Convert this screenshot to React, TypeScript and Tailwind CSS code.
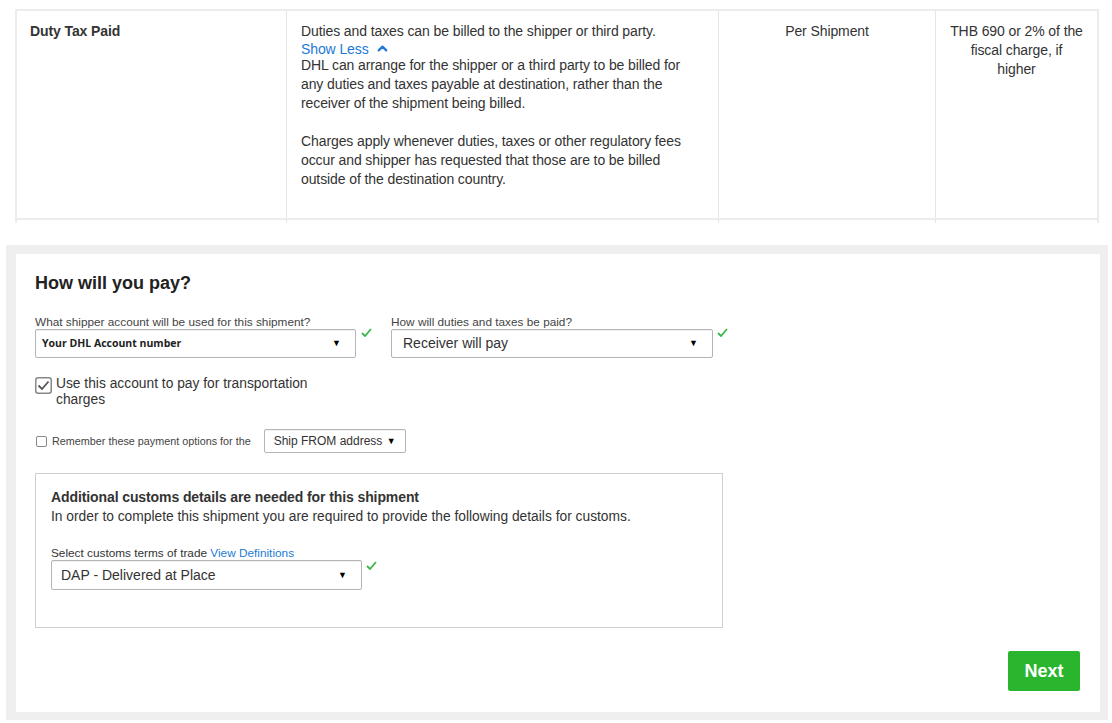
import React from "react";
import { ChevronUp } from "lucide-react";

const arial = { fontFamily: '"Liberation Sans", Arial, sans-serif' };

function Check({ className = "" }: { className?: string }) {
  return (
    <svg width="11" height="9" viewBox="0 0 11 9" className={className}>
      <path d="M1 5 L4 8 L10 1" fill="none" stroke="#3cb54a" strokeWidth="1.8" />
    </svg>
  );
}

function Arrow() {
  return <span className="text-[9px] leading-none text-black">▼</span>;
}

function Select({
  value,
  className,
  textClass,
}: {
  value: string;
  className: string;
  textClass: string;
}) {
  return (
    <div
      className={`flex items-center justify-between border border-[#b5b5b5] rounded-[2px] bg-white shadow-[inset_0_1px_1px_rgba(0,0,0,0.06)] ${className}`}
    >
      <span className={textClass}>{value}</span>
      <Arrow />
    </div>
  );
}

function FeeTable() {
  return (
    <div className="pt-[9px] pl-[15px]">
      <div className="w-[1084px] border-t-2 border-l-2 border-r-2 border-[#ececec]">
        <div className="grid grid-cols-[270px_432px_217px_161px] h-[207px] text-[14px] leading-[19px] text-[#333] tracking-[-0.1px]">
          <div className="border-r border-[#e6e6e6] pl-[13px] pt-[11px] font-bold">Duty Tax Paid</div>
          <div className="border-r border-[#e6e6e6] pl-[14px] pr-[24px] pt-[11px]">
            <p>Duties and taxes can be billed to the shipper or third party.</p>
            <p className="flex items-center gap-[6px] text-[#1c7ad6] leading-[14px]">
              Show Less
              <ChevronUp size={15} strokeWidth={3.5} />
            </p>
            <p>
              DHL can arrange for the shipper or a third party to be billed for
              any duties and taxes payable at destination, rather than the
              receiver of the shipment being billed.
            </p>
            <p className="mt-[19px]">
              Charges apply whenever duties, taxes or other regulatory fees
              occur and shipper has requested that those are to be billed
              outside of the destination country.
            </p>
          </div>
          <div className="border-r border-[#e6e6e6] pt-[11px] text-center">Per Shipment</div>
          <div className="pt-[11px] px-[8px] text-center">
            THB 690 or 2% of the
            <br />
            fiscal charge, if
            <br />
            higher
          </div>
        </div>
        <div className="h-[2px] bg-[#ececec] -mx-[2px]" />
        <div className="grid grid-cols-[270px_432px_217px_161px] h-[3px]">
          <div className="border-r border-[#e6e6e6]" />
          <div className="border-r border-[#e6e6e6]" />
          <div className="border-r border-[#e6e6e6]" />
          <div />
        </div>
      </div>
    </div>
  );
}

function PaymentPanel() {
  return (
    <div className="mt-[22px] ml-[6px] w-[1102px] bg-[#efefef] pt-[9px] pl-[10px] pr-[8px] pb-[8px]">
      <div className="bg-white h-[458px] pl-[19px] pr-[20px] pt-[18px] text-[#333]">
        <h2 className="text-[18px] leading-[22px] font-bold text-[#222]">How will you pay?</h2>

        <div className="flex mt-[21px]">
          <div>
            <label className="block text-[11.8px] leading-[14px] text-[#444]">
              What shipper account will be used for this shipment?
            </label>
            <div className="flex items-start">
              <Select
                value="Your DHL Account number"
                className="w-[321px] h-[29px] pl-[6px] pr-[14px]"
                textClass="text-[10.5px] font-bold text-[#222] [font-family:'Open_Sans',sans-serif]"
              />
              <Check className="ml-[5px] -mt-[1px]" />
            </div>
          </div>
          <div className="ml-[19px]">
            <label className="block text-[11.8px] leading-[14px] text-[#444]">
              How will duties and taxes be paid?
            </label>
            <div className="flex items-start">
              <Select
                value="Receiver will pay"
                className="w-[322px] h-[29px] pl-[11px] pr-[14px]"
                textClass="text-[14px] text-[#333]"
              />
              <Check className="ml-[4px] -mt-[1px]" />
            </div>
          </div>
        </div>

        <div className="flex items-start mt-[18px]">
          <svg width="17" height="17" viewBox="0 0 17 17" className="mt-[1px] shrink-0">
            <rect x="0.75" y="0.75" width="15.5" height="15.5" rx="2.5" fill="#fff" stroke="#888" strokeWidth="1.5" />
            <path d="M3.5 8.5 L7 12 L13.5 4.5" fill="none" stroke="#555" strokeWidth="1.8" />
          </svg>
          <span className="ml-[4px] w-[270px] text-[13.8px] leading-[16px] text-[#333]">
            Use this account to pay for transportation charges
          </span>
        </div>

        <div className="flex items-center mt-[21px]">
          <span className="w-[11px] h-[11px] border border-[#888] rounded-[2px] bg-white ml-[1px]" />
          <span className="ml-[5px] text-[10.8px] text-[#444]">
            Remember these payment options for the
          </span>
          <Select
            value="Ship FROM address"
            className="ml-[13px] w-[142px] h-[24px] pl-[9px] pr-[9px]"
            textClass="text-[12px] text-[#333]"
          />
        </div>

        <div className="mt-[20px] w-[688px] h-[155px] border border-[#cfcfcf] pl-[15px] pt-[15px]">
          <p className="text-[14px] leading-[17px] font-bold text-[#333] tracking-[-0.1px]">
            Additional customs details are needed for this shipment
          </p>
          <p className="mt-[2px] text-[13.8px] leading-[18px] text-[#333]">
            In order to complete this shipment you are required to provide the following details for customs.
          </p>
          <p className="mt-[20px] text-[11.8px] leading-[14px] text-[#333]">
            Select customs terms of trade <span className="text-[#1c7ad6]">View Definitions</span>
          </p>
          <div className="flex items-start">
            <Select
              value="DAP - Delivered at Place"
              className="w-[311px] h-[30px] pl-[9px] pr-[14px]"
              textClass="text-[14px] text-[#333]"
            />
            <Check className="ml-[4px] mt-[1px]" />
          </div>
        </div>

        <div className="flex justify-end mt-[23px]">
          <button className="w-[72px] h-[40px] rounded-[2px] bg-[#2ab52f] text-white text-[18px] font-bold">
            Next
          </button>
        </div>
      </div>
    </div>
  );
}

export default function App() {
  return (
    <div className="w-[1112px] h-[723px] bg-white overflow-hidden" style={arial}>
      <FeeTable />
      <PaymentPanel />
    </div>
  );
}
